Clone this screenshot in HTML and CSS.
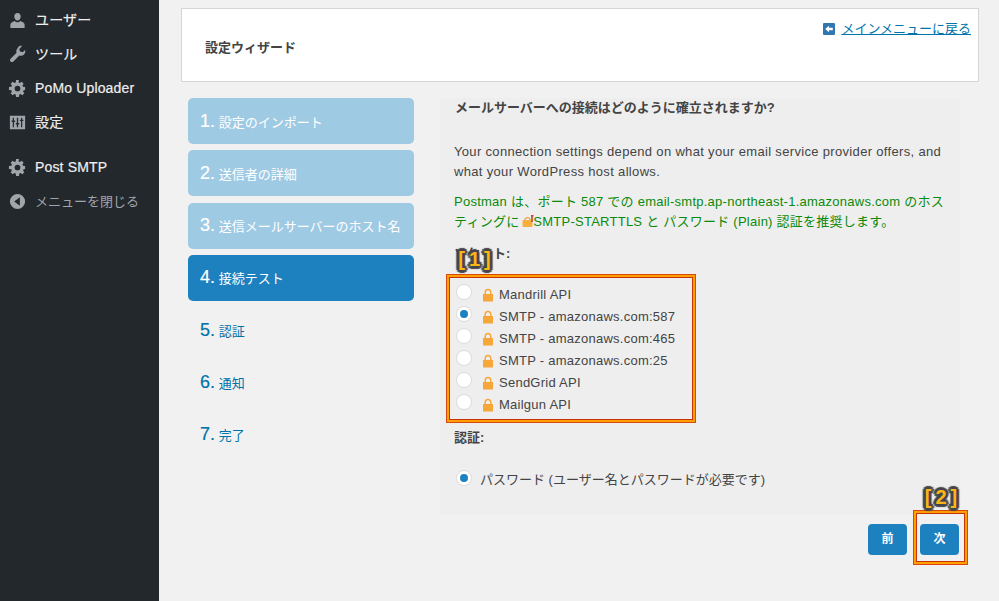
FILE: index.html
```html
<!DOCTYPE html>
<html lang="ja">
<head>
<meta charset="utf-8">
<title>設定ウィザード</title>
<link rel="stylesheet" href="styles.css">
</head>
<body>
<aside class="sidebar">
  <ul class="menu">
    <li class="menu-item"><svg class="mi" viewBox="0 0 20 20"><path d="M10 2c2 0 3.400 1.500 3.400 3.700 0 2.300-1.400 4.300-3.400 4.300S6.600 8 6.600 5.700C6.600 3.500 8 2 10 2zM7 10.500c.8.900 1.900 1.400 3 1.400s2.200-.5 3-1.400c2.500.8 4.500 2 4.500 3.700V18h-15v-3.800c0-1.700 2-2.900 4.500-3.700z"/></svg>ユーザー</li>
    <li class="menu-item"><svg class="mi" viewBox="0 0 20 20"><path d="M18 5.200c.5 1.700.1 3.500-1.200 4.800-1.300 1.300-3.200 1.700-4.800 1.100l-6.300 6.300c-.8.800-2.200.8-3 0s-.8-2.200 0-3l6.300-6.300c-.6-1.600-.2-3.500 1.100-4.800C11.400 1 13.200.6 14.900 1.100l-3 3 .7 2.800 2.800.7z"/></svg>ツール</li>
    <li class="menu-item"><svg class="mi" viewBox="0 0 20 20"><use href="#gear"/></svg>PoMo Uploader</li>
    <li class="menu-item"><svg class="mi" viewBox="0 0 20 20"><path fill-rule="evenodd" d="M2 3h16v14H2zM5 5v3H3.800v1.500H5V15h1.300V9.500h1.200V8H6.300V5zM9.300 5v5.500H8.200V12h1.100v3h1.400v-3h1.100v-1.500h-1.100V5zM13.700 5v2h-1.200v1.500h1.200V15H15V8.500h1.200V7H15V5z"/></svg>設定</li>
    <li class="menu-sep"></li>
    <li class="menu-item"><svg class="mi" viewBox="0 0 20 20"><path id="gear" fill-rule="evenodd" d="M18 11.500v-3l-2.300-.4c-.1-.5-.3-.9-.6-1.300l1.400-1.900-2.100-2.100-1.900 1.300c-.4-.2-.9-.4-1.300-.5L11.500 1h-3l-.4 2.600c-.5.1-.9.3-1.300.5L4.900 2.800 2.800 4.900l1.300 1.900c-.2.400-.4.800-.5 1.300L1 8.500v3l2.600.4c.1.5.3.900.5 1.300l-1.300 1.900 2.100 2.100 1.900-1.300c.4.200.8.400 1.300.5l.4 2.600h3l.4-2.600c.4-.1.9-.3 1.300-.5l1.900 1.300 2.100-2.100-1.400-1.900c.3-.4.500-.8.600-1.300zM10 13a3 3 0 1 1 0-6 3 3 0 0 1 0 6z"/></svg>Post SMTP</li>
    <li class="menu-item menu-collapse"><svg class="mi" viewBox="0 0 20 20"><path fill-rule="evenodd" d="M10 2a8 8 0 1 1 0 16 8 8 0 0 1 0-16zM12.500 5.500L6.500 10l6 4.500z"/></svg>メニューを閉じる</li>
  </ul>
</aside>

<main class="main">
  <header class="head-card">
    <h2 class="head-title">設定ウィザード</h2>
    <a class="back-link" href="#"><svg class="back-icon" viewBox="0 0 12 12"><rect width="12" height="12" rx="1" fill="#2f77b1"/><path d="M2.200 6L6 2.800v2h3.800v2.400H6v2z" fill="#fff"/></svg><span class="back-text">メインメニューに戻る</span></a>
  </header>

  <div class="wizard">
    <ol class="steps">
      <li class="step done"><b>1.</b> 設定のインポート</li>
      <li class="step done"><b>2.</b> 送信者の詳細</li>
      <li class="step done"><b>3.</b> 送信メールサーバーのホスト名</li>
      <li class="step current"><b>4.</b> 接続テスト</li>
      <li class="step"><b>5.</b> 認証</li>
      <li class="step"><b>6.</b> 通知</li>
      <li class="step"><b>7.</b> 完了</li>
    </ol>

    <div class="content">
      <section class="panel">
        <h3 class="panel-title">メールサーバーへの接続はどのように確立されますか?</h3>
        <p class="intro">Your connection settings depend on what your email service provider offers, and what your WordPress host allows.</p>
        <p class="reco">Postman は、ポート 587 での email-smtp.ap-northeast-1.amazonaws.com のホスティングに <svg class="key-lock" viewBox="0 0 12 12"><path d="M3 5V4a3 3 0 0 1 5 0v1" fill="none" stroke="#e0a030" stroke-width="1.200"/><rect x="0.500" y="5" width="10" height="7" rx="1" fill="#f7ae3c"/><path d="M9 0h2.500v1.500h-.7V7H9.200V1.500H9z" fill="#c9432f"/></svg>SMTP-STARTTLS と パスワード (Plain) 認証を推奨します。</p>
        <h4 class="field-title field-socket">ソケット:</h4>
        <div class="radio-list">
          <label class="radio-row"><span class="radio"></span><svg class="lock" viewBox="0 0 12 14"><use href="#lockshape"/></svg>Mandrill API</label>
          <label class="radio-row"><span class="radio on"></span><svg class="lock" viewBox="0 0 12 14"><path id="lockshape" fill="#f7a63a" fill-rule="evenodd" d="M2.500 6V4.200a3.500 3.500 0 0 1 7 0V6h1.500v7.500H1V6zM4 6h4V4.200a2 2 0 0 0-4 0z"/></svg>SMTP - amazonaws.com:587</label>
          <label class="radio-row"><span class="radio"></span><svg class="lock" viewBox="0 0 12 14"><use href="#lockshape"/></svg>SMTP - amazonaws.com:465</label>
          <label class="radio-row"><span class="radio"></span><svg class="lock" viewBox="0 0 12 14"><use href="#lockshape"/></svg>SMTP - amazonaws.com:25</label>
          <label class="radio-row"><span class="radio"></span><svg class="lock" viewBox="0 0 12 14"><use href="#lockshape"/></svg>SendGrid API</label>
          <label class="radio-row"><span class="radio"></span><svg class="lock" viewBox="0 0 12 14"><use href="#lockshape"/></svg>Mailgun API</label>
          <div class="callout callout-list"><span class="tag tag-list">[1]</span></div>
        </div>
        <h4 class="field-title field-auth">認証:</h4>
        <label class="radio-row auth-row"><span class="radio on"></span>パスワード (ユーザー名とパスワードが必要です)</label>
      </section>
      <div class="actions">
        <a class="btn" href="#">前</a>
        <a class="btn btn-next" href="#">次<span class="callout callout-btn"><span class="tag tag-btn">[2]</span></span></a>
      </div>
    </div>
  </div>
</main>
</body>
</html>
```
FILE: styles.css
```css
* { box-sizing: border-box; }
html, body { margin: 0; height: 100%; }
body {
  display: flex;
  width: 999px;
  height: 601px;
  overflow: hidden;
  background: #f1f1f1;
  color: #444;
  font: 13px/19px "Liberation Sans", "Noto Sans CJK JP", sans-serif;
}
.sidebar { flex: 0 0 159px; background: #23282d; }
.menu { list-style: none; margin: 0; padding: 3px 0 0; }
.menu-item {
  display: flex;
  align-items: center;
  height: 34px;
  padding-left: 8px;
  color: #eee;
  font-size: 14px;
  letter-spacing: 0.15px;
  -webkit-text-stroke: 0.2px #eee;
}
.menu-sep { height: 11px; }
.menu-collapse { color: #a0a5aa; font-size: 13px; letter-spacing: 0; -webkit-text-stroke: 0; }
.mi { width: 19px; height: 19px; margin-right: 8px; fill: #a0a5aa; flex: none; }

.main { flex: 1; padding: 8px 20px 0 22px; min-width: 0; }
.head-card {
  position: relative;
  height: 74px;
  padding: 0 23px;
  display: flex;
  align-items: center;
  justify-content: space-between;
  background: #fff;
  border: 1px solid #d3d5d7;
}
.head-title { margin: 4px 0 0; font-size: 13px; font-weight: 700; color: #444; }
.back-link {
  display: flex;
  align-items: center;
  align-self: flex-start;
  margin: 10px -16px 0 0;
  color: #0073aa;
  text-decoration: none;
}
.back-icon { width: 12px; height: 12px; margin-right: 6px; }
.back-text { text-decoration: underline; font-size: 13px; }

.wizard { display: flex; margin-top: 16px; padding-left: 7px; }
.steps { flex: 0 0 226px; list-style: none; margin: 0; padding: 0; }
.step {
  height: 46px;
  margin-bottom: 6.300px;
  padding: 2px 12px 0;
  display: flex;
  align-items: center;
  white-space: pre;
  border-radius: 5px;
  color: #0073aa;
  font-size: 13px;
}
.step b { font-size: 18px; font-weight: 400; position: relative; top: -1px; -webkit-text-stroke: 0.2px currentColor; }
.step.done { background: #9fcae4; color: #fff; }
.step.current { background: #1e81bf; color: #fff; }

.content { flex: 0 0 520px; margin-left: 26px; }
.panel {
  height: 417px;
  padding: 0 12px 0 14px;
  background: #eee;
  position: relative;
}
.panel-title {
  margin: 0;
  padding: 0 1px;
  height: 20px;
  font-size: 13px;
  line-height: 19px;
  font-weight: 700;
  color: #444;
}
.intro { margin: 24px 0 0; line-height: 20px; letter-spacing: 0.33px; color: #444; }
.reco { margin: 10px 0 0; line-height: 20px; letter-spacing: 0.25px; color: #0a8a0a; }
.key-lock { width: 12px; height: 12px; margin: 0 -1px; vertical-align: -1px; }
.field-title { margin: 0; font-size: 13px; line-height: 19px; font-weight: 700; color: #444; }
.field-socket { margin-top: 12px; }
.radio-list { position: relative; margin-top: 20px; }
.radio-row {
  display: flex;
  align-items: center;
  height: 22px;
  letter-spacing: 0.25px;
  color: #444;
}
.radio {
  position: relative;
  top: -2px;
  flex: none;
  width: 16px;
  height: 16px;
  margin: 0 10px 0 2px;
  border-radius: 50%;
  background: #fff;
  border: 1px solid #dcdcdc;
}
.radio.on::after {
  content: "";
  position: absolute;
  inset: 3px;
  border-radius: 50%;
  background: #1e81bf;
}
.lock { width: 12px; height: 14px; margin: 1px 5px 0 0; flex: none; }
.field-auth { margin-top: 13px; }
.auth-row { margin-top: 21px; letter-spacing: 0; }
.auth-row .radio { top: -1px; margin-right: 8px; }

.callout {
  position: absolute;
  border: 3px solid #ff9f00;
  outline: 1px solid #d9480f;
  outline-offset: -1px;
  box-shadow: inset 0 0 0 1px #c8320a;
  pointer-events: none;
}
.callout-list { left: -8px; top: -9px; width: 250px; height: 149px; }
.tag {
  position: absolute;
  display: block;
  height: 29px;
  color: #fdb515;
  font: 700 20px/28px "Liberation Sans", sans-serif;
  letter-spacing: 4px;
  white-space: nowrap;
  text-align: center;
  text-shadow:
    3px 0 1px #45454a, -3px 0 1px #45454a, 0 3px 1px #45454a, 0 -3px 1px #45454a,
    2px 2px 1px #45454a, -2px 2px 1px #45454a, 2px -2px 1px #45454a, -2px -2px 1px #45454a;
}
.tag-list { left: 7px; top: -32px; width: 41px; }
.actions { display: flex; justify-content: flex-end; gap: 13px; margin: 9px 0 0; padding-right: 1px; }
.btn {
  position: relative;
  display: flex;
  align-items: center;
  justify-content: center;
  width: 39px;
  height: 31px;
  border-radius: 4px;
  background: #1e81bf;
  color: #fff;
  font-size: 12px;
  font-weight: 700;
  text-decoration: none;
}
.callout-btn { left: -7px; top: -14px; width: 55px; height: 55px; }
.tag-btn { left: 7px; top: -29px; width: 40px; height: 27px; line-height: 26px; }
```
